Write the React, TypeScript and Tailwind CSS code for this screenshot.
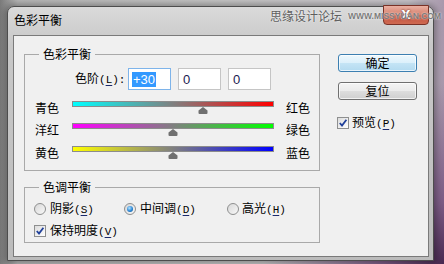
import React from "react";

const CJK = "font-['Noto_Sans_CJK_SC',sans-serif]";

function Key({ k, colon = false }: { k: string; colon?: boolean }) {
  return (
    <span className="font-['Liberation_Mono',monospace] text-[11px]">
      (<span className="underline underline-offset-[2px] decoration-[#1b2a6b]">{k}</span>){colon ? ":" : ""}
    </span>
  );
}

function Group({ title, className, children }: { title: string; className: string; children: React.ReactNode }) {
  return (
    <div className={`relative border border-[#a9a9a9] ${className}`}>
      <span className="absolute left-[14px] top-[-7px] bg-[#f0f0f0] px-[4px] text-[12px] leading-[12px]">{title}</span>
      {children}
    </div>
  );
}

function Thumb() {
  return (
    <svg width="11" height="7" viewBox="0 0 11 7" className="block">
      <path d="M5.5 0 L10 3.5 L10 6 Q10 7 9 7 L2 7 Q1 7 1 6 L1 3.5 Z" fill="#707070" />
    </svg>
  );
}

function SliderRow({
  left,
  right,
  value,
  h,
  grad,
}: {
  left: string;
  right: string;
  value: number;
  h: string;
  grad: string;
}) {
  return (
    <div className={`flex items-start pl-[10px] ${h}`}>
      <span className="w-[37px] text-[12px] leading-[12px] mt-[1px]">{left}</span>
      <div className="relative w-[202px]">
        <div className={`h-[6px] border border-[#8c8c8c] ${grad}`} />
        <div className="absolute top-[6px] -translate-x-1/2" style={{ left: `${((value + 100) / 200) * 100}%` }}>
          <Thumb />
        </div>
      </div>
      <span className="ml-[12px] text-[12px] leading-[12px] mt-[1px]">{right}</span>
    </div>
  );
}

function Radio({ checked }: { checked?: boolean }) {
  return (
    <span className="flex h-[12px] w-[12px] items-center justify-center rounded-full border border-[#8e8f8f] bg-[linear-gradient(135deg,#d8d8d8,#f8f8f8)]">
      {checked && (
        <span className="h-[6px] w-[6px] rounded-full bg-[radial-gradient(circle_at_40%_35%,#b5e4ff,#2a86d6_55%,#0b4a86)]" />
      )}
    </span>
  );
}

function Check() {
  return (
    <span className="flex h-[12px] w-[12px] items-center justify-center border border-[#8e8f8f] bg-[linear-gradient(135deg,#dcdcdc,#ffffff)]">
      <svg width="10" height="10" viewBox="0 0 10 10">
        <path d="M1.8 5 L4 7.6 L8.4 1.8" fill="none" stroke="#20409a" strokeWidth="1.8" />
      </svg>
    </span>
  );
}

export default function App() {
  return (
    <div
      className={`w-[444px] h-[264px] overflow-hidden pl-[7px] pt-[6px] text-black ${CJK} bg-[radial-gradient(circle_at_100%_100%,#4a2a52_0%,#7d5c86_12%,rgba(180,170,185,0)_35%),linear-gradient(90deg,#7a7a7a_0%,#b8b8b8_4%,#c6c6c6_50%,#c8c4ca_92%,#a898ac_100%)]`}
    >
      <div className="w-[427px] h-[255px] rounded-t-[7px] border border-[#4d4d4d] bg-[linear-gradient(180deg,#dadada_0%,#c8c8c8_15%,#c2c2c2_60%,#bcbcbc_100%)] shadow-[0_0_7px_2px_rgba(0,0,0,0.35)]">
        <div className="relative flex h-[28px] items-center pl-[6px] pb-[2px]">
          <span className="text-[12px] leading-[12px]">色彩平衡</span>
          <div className="absolute right-[4px] top-[-2px] flex h-[20px] w-[46px] items-center justify-center rounded-b-[4px] border border-[#7a3227] bg-[linear-gradient(180deg,#eab0a2_0%,#d7826f_45%,#c2503c_55%,#cf6a52_100%)]">
            <span className="font-['DejaVu_Sans',sans-serif] text-[12px] font-bold leading-[12px] text-white [text-shadow:0_0_2px_#3a0d08]">X</span>
          </div>
          <div className="absolute left-[262px] top-[2px] flex items-center whitespace-nowrap">
            <span className="text-[12px] leading-[13px] text-[#5e5e5e] [text-shadow:0_0_2px_#fff]">思缘设计论坛</span>
            <span className="ml-[6px] font-['Liberation_Sans',sans-serif] text-[8.5px] font-bold leading-[10px] text-[#7c7c7c] [text-shadow:0_0_2px_#fff]">
              WWW.MISSYUAN.COM
            </span>
          </div>
        </div>
        <div className="ml-[5px] flex h-[222px] w-[416px] border border-[#7a7a7a] bg-[#f0f0f0]">
          <div className="pl-[10px] pt-[18px]">
            <Group title="色彩平衡" className="h-[117px] w-[296px]">
              <div className="mt-[13px] flex h-[22px] items-center pl-[50px]">
                <span className="w-[53px] text-[12px] leading-[12px]">
                  色阶<Key k="L" colon />
                </span>
                <div className="flex h-[22px] w-[43px] items-center border border-[#7eb4ea] bg-white pl-[3px]">
                  <span className="bg-[#3399ff] px-[1px] font-['Liberation_Sans',sans-serif] text-[13px] leading-[15px] text-white">+30</span>
                </div>
                <div className="ml-[7px] flex h-[22px] w-[43px] items-center border border-[#c5c5c5] bg-white pl-[4px]">
                  <span className="font-['Liberation_Sans',sans-serif] text-[13px] leading-[15px] text-[#1a1a50]">0</span>
                </div>
                <div className="ml-[7px] flex h-[22px] w-[43px] items-center border border-[#c5c5c5] bg-white pl-[4px]">
                  <span className="font-['Liberation_Sans',sans-serif] text-[13px] leading-[15px] text-[#1a1a50]">0</span>
                </div>
              </div>
              <div className="mt-[11px]">
                <SliderRow left="青色" right="红色" value={30} h="h-[22px]" grad="bg-[linear-gradient(90deg,#00ffff,#ff0000)]" />
                <SliderRow left="洋红" right="绿色" value={0} h="h-[23px]" grad="bg-[linear-gradient(90deg,#ff00ff,#00ff00)]" />
                <SliderRow left="黄色" right="蓝色" value={0} h="h-[22px]" grad="bg-[linear-gradient(90deg,#ffff00,#0000ff)]" />
              </div>
            </Group>
            <Group title="色调平衡" className="mt-[16px] h-[56px] w-[296px]">
              <div className="mt-[14px] flex items-center pl-[9px] text-[12px] leading-[12px]">
                <div className="flex w-[90px] items-center gap-[4px]">
                  <Radio />
                  <span>
                    阴影<Key k="S" />
                  </span>
                </div>
                <div className="flex w-[103px] items-center gap-[4px]">
                  <Radio checked />
                  <span>
                    中间调<Key k="D" />
                  </span>
                </div>
                <div className="flex items-center gap-[3px]">
                  <Radio />
                  <span>
                    高光<Key k="H" />
                  </span>
                </div>
              </div>
              <div className="mt-[8px] flex items-center gap-[4px] pl-[9px] text-[12px] leading-[12px]">
                <Check />
                <span>
                  保持明度<Key k="V" />
                </span>
              </div>
            </Group>
          </div>
          <div className="ml-[18px] pt-[18px]">
            <button className="flex h-[18px] w-[79px] items-center justify-center rounded-[3px] border border-[#3c7fb1] bg-[linear-gradient(180deg,#eef8fd_0%,#dcf0fb_48%,#c4e4f5_52%,#b3daf0_100%)] text-[12px] leading-[12px] shadow-[inset_0_0_0_1px_rgba(255,255,255,0.7)]">
              确定
            </button>
            <button className="mt-[10px] flex h-[18px] w-[79px] items-center justify-center rounded-[3px] border border-[#707070] bg-[linear-gradient(180deg,#f4f4f4_0%,#ebebeb_48%,#dddddd_52%,#cfcfcf_100%)] text-[12px] leading-[12px] shadow-[inset_0_0_0_1px_rgba(255,255,255,0.7)]">
              复位
            </button>
            <div className="ml-[-1px] mt-[16px] flex items-center gap-[3px] text-[12px] leading-[12px]">
              <Check />
              <span>
                预览<Key k="P" />
              </span>
            </div>
          </div>
        </div>
      </div>
    </div>
  );
}
